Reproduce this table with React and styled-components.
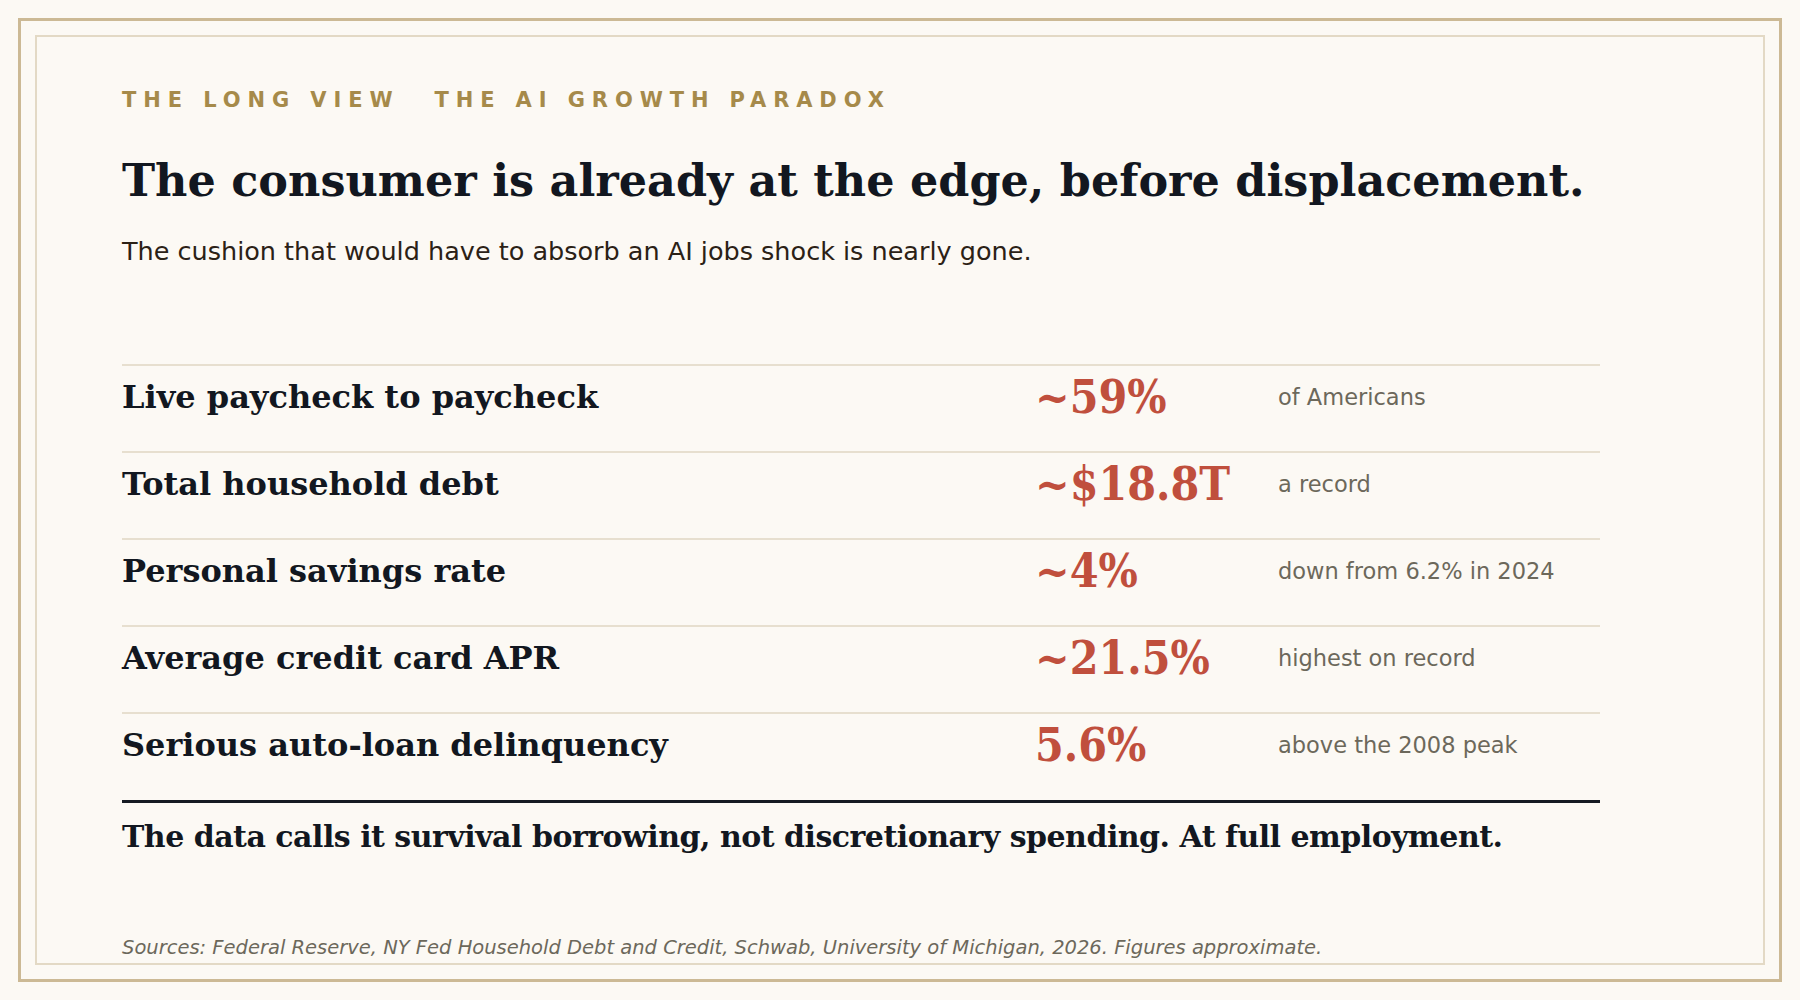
import React from "react";
import styled, { createGlobalStyle } from "styled-components";

const GlobalStyle = createGlobalStyle`
  html, body { margin: 0; padding: 0; background: #fcf9f4; }
  body { font-family: "DejaVu Sans", sans-serif; }
`;

const Frame = styled.div`
  margin: 18px;
  height: 964px;
  box-sizing: border-box;
  border: 3px solid #ccb995;
  padding: 14px;
  display: flex;
`;

const Inner = styled.div`
  flex: 1;
  border: 2px solid #e3d9c5;
  padding: 51px 0 3px 85px;
  display: flex;
  flex-direction: column;
`;

const Eyebrow = styled.div`
  display: flex;
  gap: 35px;
  font-family: "DejaVu Sans", sans-serif;
  font-weight: 700;
  font-size: 21px;
  line-height: 24px;
  letter-spacing: 6.9px;
  color: #a68a4a;
`;

const Title = styled.h1`
  margin: 41px 0 0;
  font-family: "DejaVu Serif", serif;
  font-weight: 700;
  font-size: 44.5px;
  line-height: 54px;
  color: #121720;
`;

const Subtitle = styled.p`
  margin: 27.5px 0 0;
  font-family: "DejaVu Sans", sans-serif;
  font-size: 25.5px;
  line-height: 32px;
  color: #2b2116;
`;

const Table = styled.div`
  margin-top: 97.5px;
  width: 1478px;
  padding-bottom: 1px;
  border-bottom: 3px solid #151a22;
`;

const Row = styled.div`
  display: grid;
  grid-template-columns: 913px 243px 322px;
  align-items: center;
  height: 87px;
  box-sizing: border-box;
  border-top: 2px solid #e7dfcf;
  padding-bottom: 23px;
`;

const Label = styled.span`
  font-family: "DejaVu Serif", serif;
  font-weight: 700;
  font-size: 32px;
  color: #121720;
`;

const Value = styled.span`
  font-family: "DejaVu Serif Condensed", "DejaVu Serif", serif;
  font-stretch: condensed;
  font-weight: 700;
  font-size: 46px;
  color: #c04f3d;
`;

const Note = styled.span`
  font-family: "DejaVu Sans", sans-serif;
  font-size: 22.5px;
  color: #6c685b;
`;

const Verdict = styled.p`
  margin: 16px 0 0;
  font-family: "DejaVu Serif", serif;
  font-weight: 700;
  font-size: 30px;
  line-height: 36px;
  letter-spacing: -0.5px;
  color: #121720;
`;

const Sources = styled.p`
  margin: auto 0 0;
  font-family: "DejaVu Sans", sans-serif;
  font-style: italic;
  font-size: 19.5px;
  line-height: 24px;
  color: #6c685b;
`;

const rows = [
  ["Live paycheck to paycheck", "~59%", "of Americans"],
  ["Total household debt", "~$18.8T", "a record"],
  ["Personal savings rate", "~4%", "down from 6.2% in 2024"],
  ["Average credit card APR", "~21.5%", "highest on record"],
  ["Serious auto-loan delinquency", "5.6%", "above the 2008 peak"],
];

export default function App() {
  return (
    <>
      <GlobalStyle />
      <Frame>
        <Inner>
          <Eyebrow>
            <span>THE LONG VIEW</span>
            <span>THE AI GROWTH PARADOX</span>
          </Eyebrow>
          <Title>The consumer is already at the edge, before displacement.</Title>
          <Subtitle>The cushion that would have to absorb an AI jobs shock is nearly gone.</Subtitle>
          <Table>
            {rows.map(([l, v, n]) => (
              <Row key={l}>
                <Label>{l}</Label>
                <Value>{v}</Value>
                <Note>{n}</Note>
              </Row>
            ))}
          </Table>
          <Verdict>The data calls it survival borrowing, not discretionary spending. At full employment.</Verdict>
          <Sources>Sources: Federal Reserve, NY Fed Household Debt and Credit, Schwab, University of Michigan, 2026. Figures approximate.</Sources>
        </Inner>
      </Frame>
    </>
  );
}
